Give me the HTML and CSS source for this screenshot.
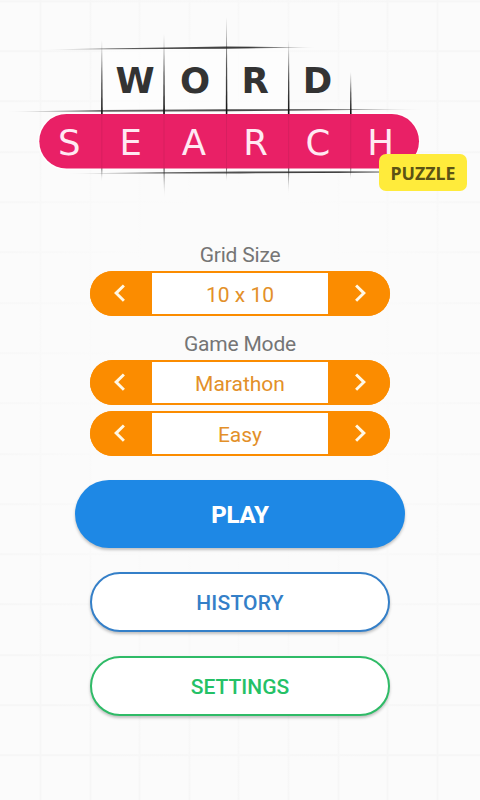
FILE: index.html
```html
<!DOCTYPE html>
<html lang="en">
<head>
<meta charset="utf-8">
<title>Word Search Puzzle</title>
<link rel="stylesheet" href="styles.css">
</head>
<body>
<main class="screen">
  <header class="logo">
    <svg class="logo-art" viewBox="0 0 480 200" width="480" height="200">
      <defs>
        <linearGradient id="across">
          <stop offset="0" stop-color="#222" stop-opacity="0"/>
          <stop offset=".25" stop-color="#222" stop-opacity=".7"/>
          <stop offset=".75" stop-color="#222" stop-opacity=".9"/>
          <stop offset="1" stop-color="#222" stop-opacity="0"/>
        </linearGradient>
        <linearGradient id="down" x2="0" y2="1">
          <stop offset="0" stop-color="#222" stop-opacity="0"/>
          <stop offset=".5" stop-color="#222" stop-opacity=".75"/>
          <stop offset="1" stop-color="#111"/>
        </linearGradient>
        <linearGradient id="tail" x2="0" y2="1">
          <stop offset="0" stop-color="#222" stop-opacity=".7"/>
          <stop offset="1" stop-color="#222" stop-opacity="0"/>
        </linearGradient>
      </defs>
      <g fill="#fff">
        <rect x="102" y="49" width="187" height="63" opacity=".5"/>
        <rect x="38" y="112.5" width="382" height="57.5" rx="28.5"/>
      </g>
      <g fill="url(#across)">
        <path d="M42 49.6 L226 46.6 L317 47.4 L226 48.8Z"/>
        <path d="M5 111.7 L100 110 L230 109.2 L425 109.3 L230 111.3 L100 111.8Z"/>
        <path d="M65 173.6 L164 172.2 L240 171.4 L430 171.2 L380 172.8 L240 173.4Z"/>
      </g>
      <g fill="url(#down)">
        <path d="M101.4 40 H102.2 L102.7 114 H101.1Z"/>
        <path d="M163.6 34 H164.4 L164.9 114 H163.2Z"/>
        <path d="M226.1 17 H226.9 L227.4 114 H225.8Z"/>
        <path d="M288.2 40 H289 L289.5 114 H287.9Z"/>
        <path d="M350.3 72 H351.1 L351.6 114 H350Z"/>
      </g>
      <g fill="url(#tail)">
        <path d="M101.3 168 H102.4 L101.9 182Z"/>
        <path d="M163.4 168 H164.8 L164.2 198Z"/>
        <path d="M226 168 H227.1 L226.5 182Z"/>
        <path d="M288 168 H289.3 L288.6 194Z"/>
        <path d="M350.2 168 H351.3 L350.7 180Z"/>
      </g>
      <rect x="39.3" y="114" width="379.7" height="54.5" rx="27.2" fill="#e92066"/>
      <path d="M101.8 114V168M164 114V168M226.5 114V168M288.6 114V168M350.7 114V168" stroke="#c91e5b" stroke-width="1" opacity=".5"/>
      <g class="word">
        <text x="135.2" y="92.5">W</text>
        <text x="195" y="92.5">O</text>
        <text x="255.2" y="92.5">R</text>
        <text x="317.5" y="92.5">D</text>
      </g>
      <g class="search">
        <text x="69.3" y="155.2">S</text>
        <text x="130.8" y="155.2">E</text>
        <text x="194" y="155.2">A</text>
        <text x="255.6" y="155.2">R</text>
        <text x="318" y="155.2">C</text>
        <text x="380.5" y="155.2">H</text>
      </g>
    </svg>
    <span class="badge">PUZZLE</span>
  </header>

  <section class="options">
    <h2 class="label">Grid Size</h2>
    <div class="picker">
      <button class="arrow"><svg width="24" height="24" viewBox="0 0 24 24"><path d="M14.9 3.5 7.1 11.1l7.8 7.6"/></svg></button>
      <span class="value">10 x 10</span>
      <button class="arrow"><svg width="24" height="24" viewBox="0 0 24 24"><path d="m9.1 3.5 7.8 7.6-7.8 7.6"/></svg></button>
    </div>
    <h2 class="label label-mode">Game Mode</h2>
    <div class="picker">
      <button class="arrow"><svg width="24" height="24" viewBox="0 0 24 24"><path d="M14.9 3.5 7.1 11.1l7.8 7.6"/></svg></button>
      <span class="value">Marathon</span>
      <button class="arrow"><svg width="24" height="24" viewBox="0 0 24 24"><path d="m9.1 3.5 7.8 7.6-7.8 7.6"/></svg></button>
    </div>
    <div class="picker picker-level">
      <button class="arrow"><svg width="24" height="24" viewBox="0 0 24 24"><path d="M14.9 3.5 7.1 11.1l7.8 7.6"/></svg></button>
      <span class="value">Easy</span>
      <button class="arrow"><svg width="24" height="24" viewBox="0 0 24 24"><path d="m9.1 3.5 7.8 7.6-7.8 7.6"/></svg></button>
    </div>
  </section>

  <nav class="actions">
    <button class="btn play">PLAY</button>
    <button class="btn history">HISTORY</button>
    <button class="btn settings">SETTINGS</button>
  </nav>
</main>
</body>
</html>
```

FILE: styles.css
```css
* { box-sizing: border-box; }

body {
  margin: 0;
  font-family: Roboto, "Liberation Sans", sans-serif;
}

button { font: inherit; border: 0; padding: 0; }

.screen {
  height: 800px;
  overflow: hidden;
  display: flex;
  flex-direction: column;
  align-items: center;
  background:
    radial-gradient(ellipse 300px 450px at 240px 370px, #fbfbfb 40%, rgba(251, 251, 251, 0) 100%),
    repeating-linear-gradient(90deg, #f6f6f6 0 2px, transparent 2px 49.6px) 39.5px 0 / 496px 100%,
    repeating-linear-gradient(#f6f6f6 0 2px, transparent 2px 50.3px) 0 50.3px / 100% 804.8px,
    #fbfbfb;
}

.logo { position: relative; width: 480px; height: 200px; }
.logo-art { display: block; }

.word, .search {
  font-family: "DejaVu Sans", sans-serif;
  font-size: 35.5px;
  text-anchor: middle;
}
.word { fill: #333; font-weight: 700; }
.search { fill: #ffe9f2; }

.badge {
  position: absolute;
  left: 379px;
  top: 154px;
  width: 88px;
  height: 37px;
  border-radius: 7px;
  background: #ffeb3b;
  color: #5c5314;
  font: 700 17.8px/39px "Noto Sans", sans-serif;
  text-align: center;
}

.options {
  width: 300px;
  margin-top: 42px;
}

.label {
  margin: 0;
  height: 29px;
  line-height: 26px;
  text-align: center;
  font-size: 21px;
  font-weight: 400;
  letter-spacing: -.2px;
  color: #757575;
}
.label-mode { margin-top: 15px; }

.picker {
  display: flex;
  height: 45px;
  border-radius: 22.5px;
  overflow: hidden;
  background: #fb8c00;
}
.picker-level { margin-top: 6px; }

.arrow {
  width: 62px;
  display: flex;
  align-items: center;
  justify-content: center;
  background: #fb8c00;
}
.arrow svg {
  fill: none;
  stroke: #fff8e6;
  stroke-width: 2.9;
}

.value {
  flex: 1;
  margin: 2px 0;
  line-height: 44px;
  text-align: center;
  font-size: 21px;
  color: #e39029;
  background: #fff;
}

.actions {
  display: flex;
  flex-direction: column;
  align-items: center;
  gap: 24px;
  margin-top: 24px;
}

.btn {
  width: 300px;
  height: 60px;
  border-radius: 30px;
  background: #fff;
  font-size: 21px;
  font-weight: 500;
  line-height: 58px;
  text-align: center;
  box-shadow: 0 2px 3px rgba(0, 0, 0, .24);
}
.play {
  width: 330px;
  height: 68px;
  padding-top: 1px;
  border-radius: 34px;
  background: #1e88e5;
  color: #fff;
  font-size: 24px;
  font-weight: 800;
  letter-spacing: -.2px;
  line-height: 69px;
}
.history { border: 2px solid #347fc8; color: #347fc8; letter-spacing: .2px; }
.settings { border: 2px solid #2fbb67; color: #24c166; }
```
